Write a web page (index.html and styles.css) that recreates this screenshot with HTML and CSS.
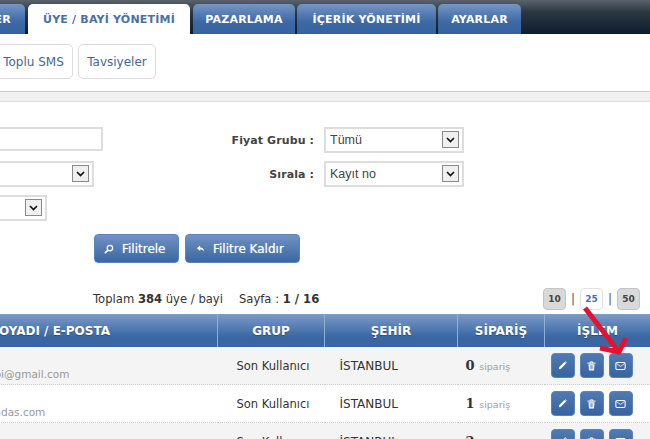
FILE: index.html
```html
<!DOCTYPE html>
<html lang="en">
<head>
    <meta charset="UTF-8">
    <meta name="viewport" content="width=device-width, initial-scale=1.0">
    <title>Üye / Bayi Yönetimi</title>
    <link rel="stylesheet" href="styles.css">
</head>
<body>
    <div class="page">
        <nav class="topbar">
            <a class="tab tab-first">SİPARİŞLER</a>
            <a class="tab tab-active">ÜYE / BAYİ YÖNETİMİ</a>
            <a class="tab tab-pazarlama">PAZARLAMA</a>
            <a class="tab tab-icerik">İÇERİK YÖNETİMİ</a>
            <a class="tab tab-ayarlar">AYARLAR</a>
        </nav>

        <div class="subnav">
            <a class="subnav-item subnav-sms">Toplu SMS</a>
            <a class="subnav-item subnav-tavsiye">Tavsiyeler</a>
        </div>

        <div class="band"></div>

        <div class="filter">
            <div class="filter-col filter-left">
                <input class="field field-text" type="text">
                <div class="select-wrap select-mid">
                    <select class="field"><option></option></select>
                    <span class="select-arrow"><svg width="9" height="6" viewBox="0 0 9 6"><path d="M1 1l3.500 3.500L8 1" fill="none" stroke="#111" stroke-width="1.700"/></svg></span>
                </div>
                <div class="select-wrap select-small">
                    <select class="field"><option></option></select>
                    <span class="select-arrow"><svg width="9" height="6" viewBox="0 0 9 6"><path d="M1 1l3.500 3.500L8 1" fill="none" stroke="#111" stroke-width="1.700"/></svg></span>
                </div>
            </div>
            <div class="filter-col filter-right">
                <div class="filter-row">
                    <label class="filter-label">Fiyat Grubu :</label>
                    <div class="select-wrap select-right">
                        <select class="field"><option>Tümü</option></select>
                        <span class="select-arrow"><svg width="9" height="6" viewBox="0 0 9 6"><path d="M1 1l3.500 3.500L8 1" fill="none" stroke="#111" stroke-width="1.700"/></svg></span>
                    </div>
                </div>
                <div class="filter-row">
                    <label class="filter-label">Sırala :</label>
                    <div class="select-wrap select-right">
                        <select class="field"><option>Kayıt no</option></select>
                        <span class="select-arrow"><svg width="9" height="6" viewBox="0 0 9 6"><path d="M1 1l3.500 3.500L8 1" fill="none" stroke="#111" stroke-width="1.700"/></svg></span>
                    </div>
                </div>
            </div>
        </div>

        <div class="filter-actions">
            <button class="btn btn-filter">
                <svg width="10" height="10" viewBox="0 0 11 11"><circle cx="6.500" cy="4.500" r="3" fill="none" stroke="#fff" stroke-width="1.400"/><path d="M4.300 6.700L1 10" stroke="#fff" stroke-width="1.800"/></svg>
                Filitrele
            </button>
            <button class="btn btn-clear">
                <svg width="9" height="8" viewBox="0 0 11 10"><path d="M1 4l4-3.500V3c3 0 5 1.500 5 5-1-2-2.500-2.500-5-2.500V7.500z" fill="#fff"/></svg>
                Filitre Kaldır
            </button>
        </div>

        <div class="summary">
            <div class="summary-text">
                <span>Toplam <b>384</b> üye / bayi</span>
                <span>Sayfa : <b>1 / 16</b></span>
            </div>
            <div class="pager">
                <a class="pager-item">10</a>
                <span class="pager-sep">|</span>
                <a class="pager-item pager-current">25</a>
                <span class="pager-sep">|</span>
                <a class="pager-item">50</a>
            </div>
        </div>

        <table class="members">
            <thead>
                <tr>
                    <th class="col-name">ADI SOYADI / E-POSTA</th>
                    <th class="col-group">GRUP</th>
                    <th class="col-city">ŞEHİR</th>
                    <th class="col-orders">SİPARİŞ</th>
                    <th class="col-actions">İŞLEM</th>
                </tr>
            </thead>
            <tbody id="memberRows"></tbody>
        </table>

        <svg class="arrow" width="60" height="60" viewBox="0 0 60 60">
            <path d="M6 4L40 48" fill="none" stroke="#e8112d" stroke-width="5"/>
            <path d="M21 44L40 48L47 34" fill="none" stroke="#e8112d" stroke-width="5"/>
        </svg>
    </div>

    <script>
        const members = [
            { email: 'kullanicibi@gmail.com', orders: 0 },
            { email: 'info@yandas.com', orders: 1 },
            { email: '', orders: 2 }
        ];

        const penIcon = '<svg width="9" height="9" viewBox="0 0 11 11"><path d="M1 10l.6-2.600L7.800 1.200l2 2L3.600 9.400zM8.300.8l.7-.5 1.700 1.700-.5.700z" fill="#fff"/></svg>';
        const trashIcon = '<svg width="9" height="10" viewBox="0 0 11 12"><path d="M.5 2.500h10M4 2.500V1h3v1.500" fill="none" stroke="#fff" stroke-width="1.200"/><path d="M1.800 3.800h7.400L8.500 11.500h-6z" fill="#fff"/><path d="M4 5v5M5.500 5v5M7 5v5" stroke="#3f6ba6" stroke-width=".7"/></svg>';
        const mailIcon = '<svg width="11" height="8" viewBox="0 0 13 10"><rect x=".7" y=".7" width="11.600" height="8.600" rx="1.500" fill="none" stroke="#fff" stroke-width="1.300"/><path d="M1.500 2l5 3.500 5-3.500" fill="none" stroke="#fff"/></svg>';

        const rows = document.getElementById('memberRows');
        members.forEach(member => {
            const row = document.createElement('tr');
            row.innerHTML = `
                <td class="cell-name"><span class="email">${member.email}</span></td>
                <td class="cell-group">Son Kullanıcı</td>
                <td class="cell-city">İSTANBUL</td>
                <td class="cell-orders"><b>${member.orders}</b> <span class="muted">sipariş</span></td>
                <td class="cell-actions">
                    <div class="row-actions">
                        <a class="icon-btn">${penIcon}</a>
                        <a class="icon-btn">${trashIcon}</a>
                        <a class="icon-btn">${mailIcon}</a>
                    </div>
                </td>
            `;
            rows.appendChild(row);
        });
    </script>
</body>
</html>
```

FILE: styles.css
```css
html,
body {
    margin: 0;
    height: 439px;
    overflow: hidden;
    background-color: #fff;
}

body {
    font-family: "DejaVu Sans", Verdana, sans-serif;
    font-size: 11px;
    color: #333;
}

/* the shot is cropped: the page really starts 250px left of the window */
.page {
    position: relative;
    width: 900px;
    margin-left: -250px;
}

.topbar {
    display: flex;
    align-items: flex-end;
    height: 34px;
    background: linear-gradient(#5a636c, #2c3743 35%, #0e1c2c);
}

.tab {
    display: flex;
    align-items: center;
    justify-content: center;
    box-sizing: border-box;
    height: 30px;
    margin-right: 2px;
    padding-top: 1px;
    border-radius: 5px 5px 0 0;
    background: linear-gradient(#7496c3, #3d69a6 60%, #35619e);
    color: #fff;
    font-size: 11px;
    font-weight: bold;
    letter-spacing: 0.2px;
}

.tab-first {
    width: 275px;
    margin-right: 3px;
    justify-content: flex-end;
    padding-right: 14px;
}

.tab-active {
    width: 162px;
    margin-right: 3px;
    background: #fff;
    color: #4a71a3;
}

.tab-pazarlama {
    width: 102px;
}

.tab-icerik {
    width: 139px;
}

.tab-ayarlar {
    width: 83px;
}

.subnav {
    display: flex;
    justify-content: flex-end;
    gap: 5px;
    width: 406px;
    padding-top: 10px;
    height: 47px;
}

.subnav-item {
    display: flex;
    align-items: center;
    justify-content: center;
    box-sizing: border-box;
    height: 35px;
    border: 1px solid #dcdcdc;
    border-radius: 5px;
    color: #46688f;
    font-size: 12px;
}

.subnav-sms {
    width: 79px;
}

.subnav-tavsiye {
    width: 78px;
}

.band {
    height: 9px;
    border-top: 1px solid #ccc;
    border-bottom: 1px solid #ddd;
    background-color: #f1f1f1;
}

.filter {
    display: flex;
    padding-top: 25px;
}

.filter-col {
    display: flex;
    flex-direction: column;
    gap: 8px;
}

.filter-left {
    width: 214px;
    margin-left: 180px;
}

.filter-row {
    display: flex;
    align-items: center;
}

.filter-label {
    width: 170px;
    margin-right: 10px;
    text-align: right;
    font-size: 11px;
    font-weight: bold;
    letter-spacing: 0.1px;
    color: #444;
}

.field {
    box-sizing: border-box;
    width: 100%;
    height: 26px;
    padding: 0 4px;
    border: 2px solid #ddd;
    border-radius: 0;
    background-color: #fff;
    font-family: "Liberation Sans", Arial, sans-serif;
    font-size: 12.5px;
    color: #444;
    appearance: none;
}

.field-text {
    width: 173px;
    height: 24px;
    margin-bottom: 2px;
}

.select-wrap {
    position: relative;
}

.select-mid {
    width: 164px;
}

.select-small {
    width: 117px;
}

.select-right {
    width: 140px;
}

.select-arrow {
    position: absolute;
    top: 4px;
    right: 5px;
    display: flex;
    align-items: center;
    justify-content: center;
    box-sizing: border-box;
    width: 17px;
    height: 17px;
    border: 1px solid #8a8a8a;
    background-color: #f0f0f0;
    pointer-events: none;
}

.filter-actions {
    display: flex;
    gap: 6px;
    margin-top: 13px;
    padding-left: 344px;
}

.btn {
    display: flex;
    align-items: center;
    gap: 8px;
    box-sizing: border-box;
    height: 29px;
    padding: 0 0 0 9px;
    border: 1px solid #5d84b8;
    border-radius: 4px;
    background: linear-gradient(#6f93c2, #3a66a3);
    color: #fff;
    font-family: inherit;
    font-size: 12px;
    text-shadow: 0 0 1px rgba(255, 255, 255, 0.6);
}

.btn-filter {
    width: 85px;
}

.btn-clear {
    width: 115px;
    padding-left: 10px;
}

.summary {
    display: flex;
    align-items: center;
    justify-content: space-between;
    height: 21px;
    margin-top: 25px;
    padding-left: 343px;
    padding-right: 10px;
}

.summary-text {
    display: flex;
    gap: 16px;
    font-size: 11.6px;
}

.pager {
    display: flex;
    align-items: center;
    gap: 5px;
    font-size: 9px;
}

.pager-item {
    display: flex;
    align-items: center;
    justify-content: center;
    box-sizing: border-box;
    width: 23px;
    height: 22px;
    border: 1px solid #c4c4c4;
    border-radius: 4px;
    background-color: #d9d9d9;
    font-weight: bold;
    color: #444;
}

.pager-current {
    border-color: #e2e2e2;
    background-color: #fff;
    color: #4a71a3;
}

.pager-sep {
    color: #555;
    font-size: 12px;
}

.members {
    width: 900px;
    margin-top: 5px;
    border-collapse: collapse;
    table-layout: fixed;
}

.members th {
    height: 33px;
    padding: 0;
    border-left: 1px solid #8fb0d6;
    background: linear-gradient(#7a9cc8, #3a66a3 70%);
    color: #fff;
    font-size: 12px;
    font-weight: bold;
    text-shadow: 0 1px 1px rgba(0, 0, 0, 0.3);
}

.members th.col-name {
    width: 359px;
    padding-right: 107px;
    text-align: right;
}

.col-group {
    width: 106px;
}

.col-city {
    width: 132px;
}

.col-orders {
    width: 86px;
}

.members td {
    height: 37px;
    padding: 0;
    border-bottom: 1px dotted #ccc;
    font-size: 11.5px;
    color: #333;
}

.members tbody tr:nth-child(odd) td {
    background-color: #f4f4f4;
}

.members td.cell-name {
    vertical-align: bottom;
    padding-left: 201px;
}

.email {
    display: block;
    padding-bottom: 4px;
    font-size: 10.5px;
    white-space: nowrap;
    color: #999;
}

.members td.cell-group {
    padding-left: 19px;
}

.members td.cell-city {
    padding-left: 15px;
    font-size: 12px;
}

.members td.cell-orders {
    padding-left: 8px;
}

.cell-orders b {
    font-family: "DejaVu Serif", serif;
    font-size: 13px;
}

.muted {
    margin-left: 1px;
    color: #a0a0a0;
    font-size: 9.5px;
}

.row-actions {
    display: flex;
    gap: 5px;
    padding-left: 6px;
}

.icon-btn {
    display: flex;
    align-items: center;
    justify-content: center;
    box-sizing: border-box;
    width: 24px;
    height: 25px;
    border: 1px solid #5d84b8;
    border-radius: 4px;
    background: linear-gradient(#4f7ab2, #38639f);
}

.arrow {
    position: absolute;
    top: 304px;
    left: 829px;
}
```
